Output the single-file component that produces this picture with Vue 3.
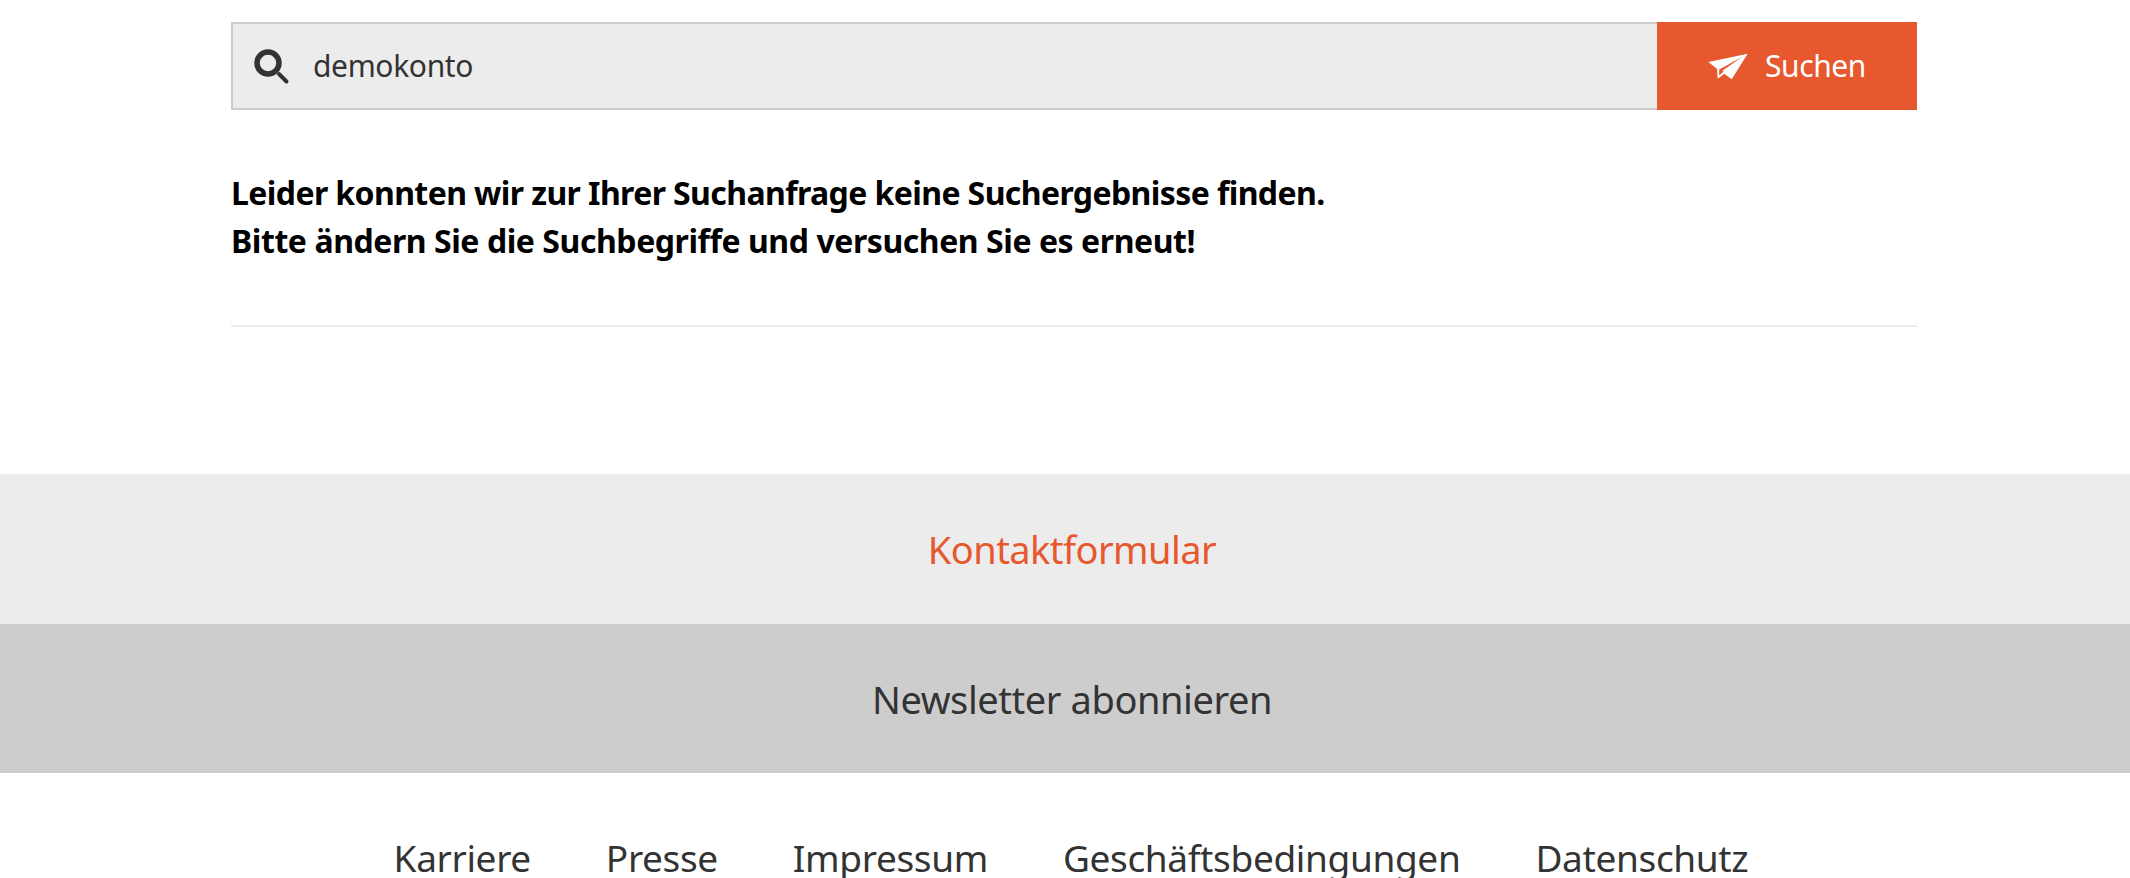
<script setup>
const links = ['Karriere', 'Presse', 'Impressum', 'Geschäftsbedingungen', 'Datenschutz']
</script>

<template>
  <div class="page">
    <main class="content">
      <form class="search" @submit.prevent>
        <div class="field">
          <svg class="lens" viewBox="0 0 36 36" width="36" height="36" aria-hidden="true">
            <circle cx="14" cy="14" r="11" fill="none" stroke="#333" stroke-width="5.5" />
            <path d="M25 25 L32.5 32.5" fill="none" stroke="#333" stroke-width="4" stroke-linecap="round" />
          </svg>
          <span class="query">demokonto</span>
        </div>
        <button class="submit" type="submit">
          <svg class="plane" viewBox="0 0 40 27" width="40" height="27" aria-hidden="true">
            <path d="M0.3 9 L39.7 0.7 L23.7 26.3 L16.3 20.7 L9.7 25.7 L9 15.7 Z M34.5 3.8 L11.2 16.4 L11.2 22.6 L15.6 18.6 L14.4 17.7 Z" fill="#fff" fill-rule="evenodd" />
          </svg>
          <span class="submit-label">Suchen</span>
        </button>
      </form>
      <p class="message"><span class="line-one">Leider konnten wir zur Ihrer Suchanfrage keine Suchergebnisse finden.</span><br /><span class="line-two">Bitte ändern Sie die Suchbegriffe und versuchen Sie es erneut!</span></p>
      <hr class="rule" />
    </main>
    <a class="band band-light">Kontaktformular</a>
    <a class="band band-dark">Newsletter abonnieren</a>
    <nav class="links">
      <a v-for="link in links" :key="link">{{ link }}</a>
    </nav>
  </div>
</template>

<style>
html, body { margin: 0; height: 878px; overflow: hidden; background: #fff; }
</style>

<style scoped>
.page {
  font-family: "Noto Sans", "Open Sans", sans-serif;
  color: #333;
  height: 878px;
  overflow: hidden;
}
.content {
  width: 1686px;
  margin: 0 auto 0 231px;
  padding-top: 22px;
  height: 474px;
  box-sizing: border-box;
}
.search { display: flex; height: 88px; }
.field {
  flex: 1;
  display: flex;
  align-items: center;
  background: #ececec;
  border: 2px solid #ccc;
  border-right: 0;
  padding-left: 21px;
  gap: 23px;
}
.lens { flex: none; margin-top: 2px; }
.query { font-size: 30px; letter-spacing: -0.35px; margin-top: -2px; }
.submit {
  width: 260px;
  border: 0;
  padding: 0;
  background: #e8582e;
  color: #fff;
  font: inherit;
  font-size: 30px;
  display: flex;
  align-items: center;
  justify-content: center;
  gap: 17px;
}
.submit-label { letter-spacing: -0.4px; margin-top: -2px; }
.message {
  margin: 0;
  padding-top: 59px;
  font-size: 32px;
  line-height: 48px;
  font-weight: 700;
  color: #000;
}
.line-one { letter-spacing: -0.6px; }
.line-two { letter-spacing: -0.44px; }
.rule { margin: 60px 0 0; border: 0; border-top: 2px solid #ececec; }
.band {
  display: flex;
  align-items: center;
  justify-content: center;
  padding-left: 14px;
  font-size: 38px;
}
.band-light { height: 150px; background: #ececec; color: #e8582e; letter-spacing: -0.55px; }
.band-dark { height: 149px; background: #cdcdcd; color: #333; letter-spacing: -0.43px; }
.links {
  display: flex;
  justify-content: center;
  gap: 75px;
  padding: 59px 0 0 12px;
  font-size: 37px;
  line-height: 52px;
  letter-spacing: -0.35px;
}
</style>
